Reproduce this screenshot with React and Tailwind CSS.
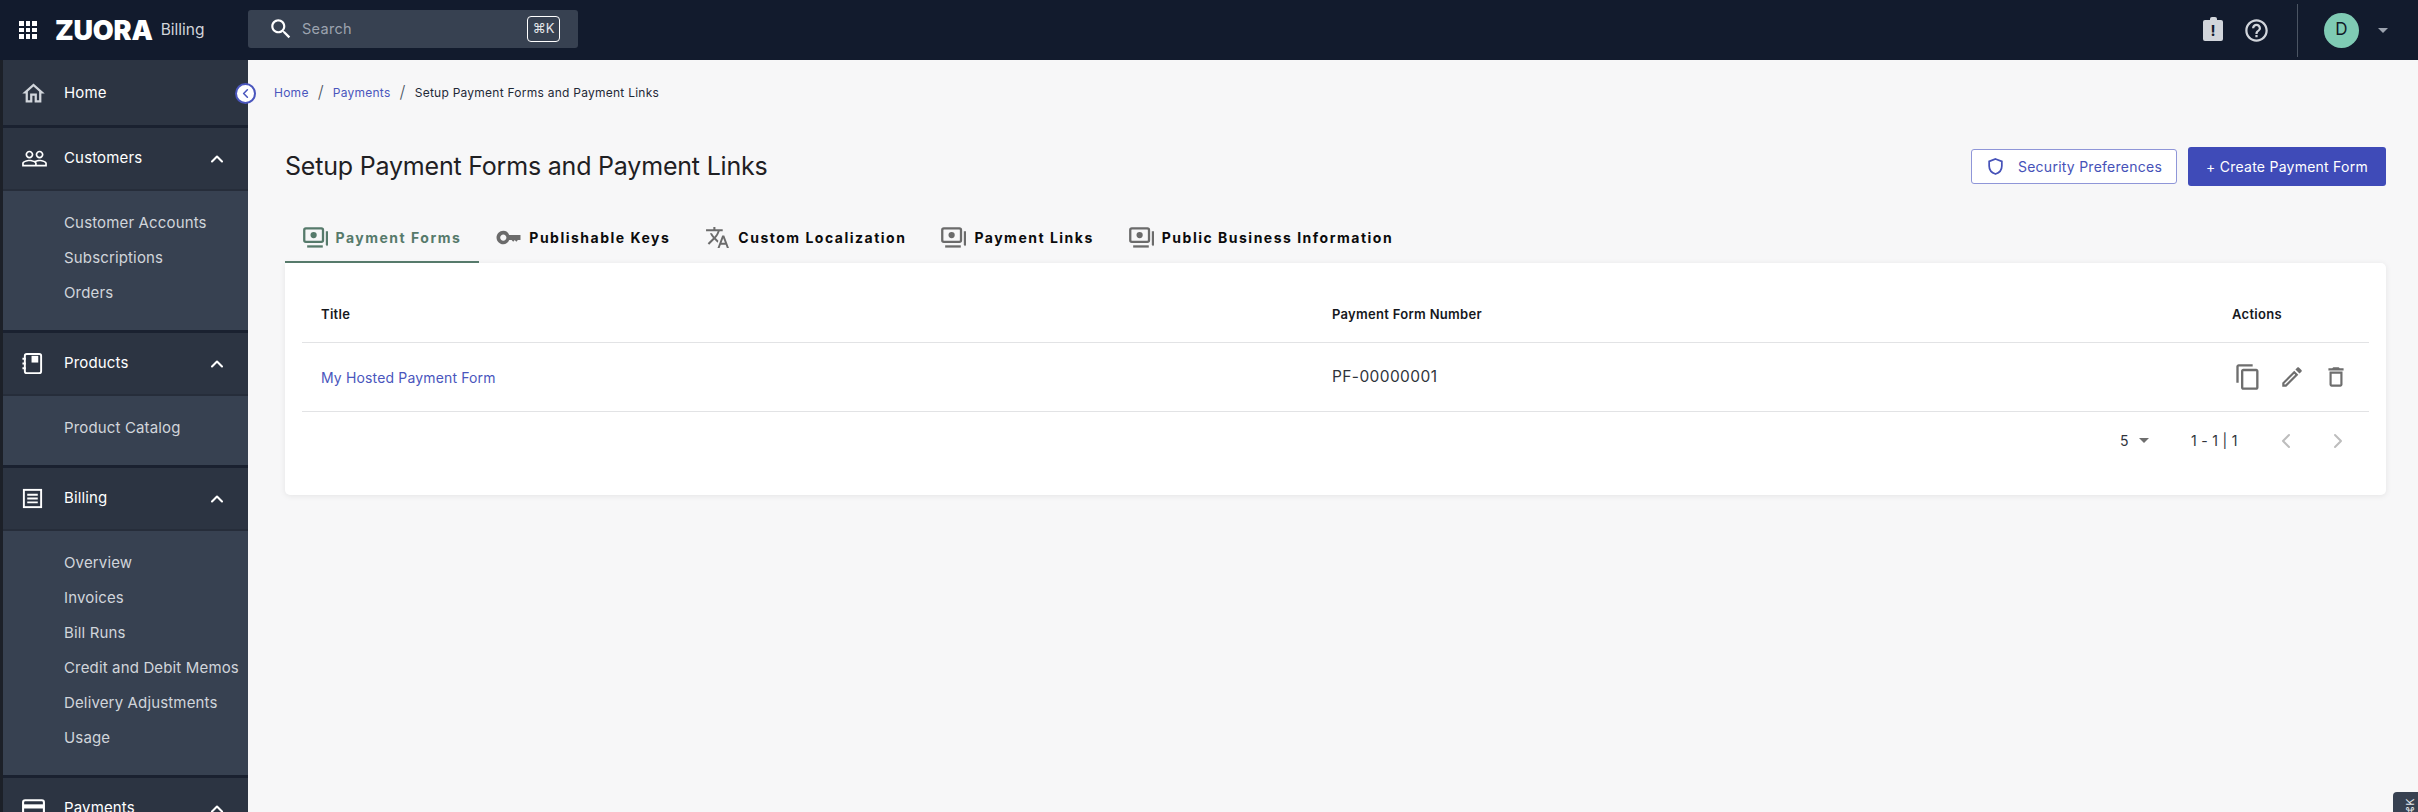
import React from "react";
import { ChevronUp, ChevronLeft, ChevronRight } from "lucide-react";

const font = { fontFamily: "Inter, 'Liberation Sans', sans-serif" };

const Icon = ({ d, className }) => (
  <svg viewBox="0 0 24 24" fill="currentColor" className={className}>
    <path d={d} />
  </svg>
);

const paths = {
  home: "M12 5.69l5 4.5V18h-2v-6H9v6H7v-7.81l5-4.5M12 3L2 12h3v8h6v-6h2v6h6v-8h3L12 3z",
  people:
    "M16.5 13c-1.2 0-3.07.34-4.5 1-1.43-.67-3.3-1-4.5-1C5.33 13 1 14.08 1 16.25V19h22v-2.75c0-2.17-4.33-3.25-6.5-3.25zm-4 4.5h-10v-1.25c0-.54 2.56-1.75 5-1.75s5 1.21 5 1.75v1.25zm9 0H14v-1.25c0-.46-.2-.86-.52-1.22.88-.3 1.96-.53 3.02-.53 2.44 0 5 1.21 5 1.75v1.25zM7.5 12c1.93 0 3.5-1.57 3.5-3.5S9.43 5 7.5 5 4 6.57 4 8.5 5.57 12 7.5 12zm0-5.5c1.1 0 2 .9 2 2s-.9 2-2 2-2-.9-2-2 .9-2 2-2zm9 5.5c1.93 0 3.5-1.57 3.5-3.5S18.43 5 16.5 5 13 6.57 13 8.5s1.57 3.5 3.5 3.5zm0-5.5c1.1 0 2 .9 2 2s-.9 2-2 2-2-.9-2-2 .9-2 2-2z",
  search:
    "M15.5 14h-.79l-.28-.27C15.41 12.59 16 11.11 16 9.5 16 5.91 13.09 3 9.5 3S3 5.91 3 9.5 5.91 16 9.5 16c1.61 0 3.09-.59 4.23-1.57l.27.28v.79l5 4.99L20.49 19l-4.99-5zm-6 0C7.01 14 5 11.99 5 9.5S7.01 5 9.5 5 14 7.01 14 9.5 11.99 14 9.5 14z",
  help: "M11 18h2v-2h-2v2zm1-16C6.48 2 2 6.48 2 12s4.48 10 10 10 10-4.48 10-10S17.52 2 12 2zm0 18c-4.41 0-8-3.59-8-8s3.59-8 8-8 8 3.59 8 8-3.59 8-8 8zm0-14c-2.21 0-4 1.79-4 4h2c0-1.1.9-2 2-2s2 .9 2 2c0 2-3 1.75-3 5h2c0-2.25 3-2.5 3-5 0-2.21-1.79-4-4-4z",
  copy: "M16 1H4c-1.1 0-2 .9-2 2v14h2V3h12V1zm3 4H8c-1.1 0-2 .9-2 2v14c0 1.1.9 2 2 2h11c1.1 0 2-.9 2-2V7c0-1.1-.9-2-2-2zm0 16H8V7h11v14z",
  edit: "M3 17.25V21h3.75L17.81 9.94l-3.75-3.75L3 17.25zM5.92 19H5v-.92l9.06-9.06.92.92L5.92 19zM20.71 5.63l-2.34-2.34c-.2-.2-.45-.29-.71-.29s-.51.1-.7.29l-1.83 1.83 3.75 3.75 1.83-1.83c.39-.39.39-1.02 0-1.41z",
  trash: "M6 19c0 1.1.9 2 2 2h8c1.1 0 2-.9 2-2V7H6v12zM8 9h8v10H8V9zm7.5-5l-1-1h-5l-1 1H5v2h14V4h-3.5z",
  key: "M12.65 9.5C11.8 7 9.6 5.5 7 5.5c-3.6 0-6.5 2.9-6.5 6.5s2.9 6.5 6.5 6.5c2.6 0 4.8-1.5 5.65-4H15l1.5 1.5L18 14.5l1.5 1.5L21 14.5h2.5v-5H12.65zM7 15c-1.66 0-3-1.34-3-3s1.34-3 3-3 3 1.34 3 3-1.34 3-3 3z",
  translate:
    "M12.87 15.07l-2.54-2.51.03-.03c1.74-1.94 2.98-4.17 3.71-6.53H17V4h-7V2H8v2H1v1.99h11.17C11.5 7.92 10.44 9.75 9 11.35 8.07 10.32 7.3 9.19 6.69 8h-2c.73 1.63 1.73 3.17 2.98 4.56l-5.09 5.02L4 19l5-5 3.11 3.11.76-2.04zM18.5 10h-2L12 22h2l1.12-3h4.75L21 22h2l-4.5-12zm-2.62 7l1.62-4.33L19.12 17h-3.24z",
};

const MoneyIcon = ({ className }) => (
  <svg viewBox="0 0 24 20" fill="none" stroke="currentColor" strokeWidth="2.2" className={className}>
    <rect x="1.2" y="1.2" width="18" height="13" rx="1.5" />
    <circle cx="10.2" cy="7.7" r="3" fill="currentColor" stroke="none" />
    <path d="M23 4v12.5a1.5 1.5 0 0 1-0.6 1" />
    <path d="M4 18.6h15" />
  </svg>
);

const NotebookIcon = ({ className }) => (
  <svg viewBox="0 0 24 24" fill="none" stroke="currentColor" strokeWidth="2" className={className}>
    <rect x="4" y="2" width="17" height="20" rx="2" />
    <rect x="11" y="4" width="7" height="7" fill="currentColor" stroke="none" />
    <path d="M1.5 7H5M1.5 12H5M1.5 17H5" />
  </svg>
);

const ReceiptIcon = ({ className }) => (
  <svg viewBox="0 0 24 24" fill="none" stroke="currentColor" strokeWidth="2" className={className}>
    <rect x="3" y="3" width="18" height="18" />
    <path d="M6.5 8h11M6.5 12h11M6.5 16h11" />
  </svg>
);

const CardIcon = ({ className }) => (
  <svg viewBox="0 0 24 24" fill="none" stroke="currentColor" strokeWidth="2" className={className}>
    <rect x="2" y="4" width="20" height="16" rx="2" />
    <path d="M2 10h20" strokeWidth="4" />
  </svg>
);

const Caret = ({ className }) => (
  <span className={`w-0 h-0 border-x-[5px] border-x-transparent border-t-[5px] ${className}`} />
);

const sections = [
  { title: "Customers", icon: <Icon d={paths.people} className="w-[27px] h-[27px]" />, items: ["Customer Accounts", "Subscriptions", "Orders"] },
  { title: "Products", icon: <NotebookIcon className="w-[23px] h-[23px]" />, items: ["Product Catalog"] },
  {
    title: "Billing",
    icon: <ReceiptIcon className="w-[23px] h-[23px]" />,
    items: ["Overview", "Invoices", "Bill Runs", "Credit and Debit Memos", "Delivery Adjustments", "Usage"],
  },
  { title: "Payments", icon: <CardIcon className="w-[25px] h-[25px]" />, items: [] },
];

const tabs = [
  { label: "Payment Forms", icon: <MoneyIcon className="w-[25px] h-[21px]" />, active: true },
  { label: "Publishable Keys", icon: <Icon d={paths.key} className="w-[25px] h-[25px]" /> },
  { label: "Custom Localization", icon: <Icon d={paths.translate} className="w-[25px] h-[25px]" /> },
  { label: "Payment Links", icon: <MoneyIcon className="w-[25px] h-[21px]" /> },
  { label: "Public Business Information", icon: <MoneyIcon className="w-[25px] h-[21px]" /> },
];

const Header = () => (
  <header className="h-[60px] shrink-0 bg-[#121b2d] flex items-center">
    <div className="w-[248px] flex items-center pl-[19px]">
      <div className="grid grid-cols-3 gap-[2px] w-[18px]">
        {Array.from({ length: 9 }).map((_, i) => (
          <span key={i} className="w-[4.6px] h-[4.6px] bg-white" />
        ))}
      </div>
      <span className="ml-[18px] text-white font-black text-[27px] leading-none tracking-[-0.2px]">ZUORA</span>
      <span className="ml-[8px] text-[#d1d5db] text-[15.5px]">Billing</span>
    </div>
    <div className="w-[330px] h-[38px] bg-[#374151] rounded-[3px] flex items-center pl-[20px] pr-[18px] mb-[2px]">
      <Icon d={paths.search} className="w-[26px] h-[26px] text-white" />
      <span className="ml-[8px] text-[#9ca3af] text-[14.5px] tracking-[0.3px]">Search</span>
      <span className="ml-auto w-[33px] h-[26px] border border-white rounded-[4px] text-[#e5e7eb] text-[13px] flex items-center justify-center">⌘K</span>
    </div>
    <div className="ml-auto flex items-center h-full">
      <div className="w-[20px] h-[21px] bg-[#d1d5db] rounded-[2px] relative flex items-center justify-center text-[#121b2d] font-bold text-[15px] leading-none">
        <span className="absolute -top-[3px] w-[7px] h-[4px] bg-[#d1d5db] rounded-t-[2px]" />!
      </div>
      <Icon d={paths.help} className="ml-[20px] w-[27px] h-[27px] text-[#d1d5db]" />
      <div className="ml-[27px] w-px h-[53px] bg-[#4b5563]" />
      <div className="ml-[26px] w-[35px] h-[35px] rounded-full bg-[#7fcbb4] flex items-center justify-center text-[#111827] text-[17px]">D</div>
      <Caret className="ml-[19px] mr-[30px] border-t-[#9ca3af]" />
    </div>
  </header>
);

const Sidebar = () => (
  <aside className="w-[248px] shrink-0 bg-[#374151] border-l-[3px] border-[#1c2028] overflow-hidden">
    <div className="h-[65px] bg-[#2c3442] flex items-center pl-[17px] pt-[1px] text-white text-[15px] tracking-[0.15px]">
      <Icon d={paths.home} className="w-[27px] h-[27px] text-[#d1d5db]" />
      <span className="ml-[17px]">Home</span>
    </div>
    {sections.map((s) => (
      <div key={s.title} className="border-t-[3px] border-[#1a2130]">
        <div className="h-[63px] bg-[#2c3442] border-b-[2px] border-[#262d3a] flex items-center text-white text-[15px] tracking-[0.15px]">
          <span className="w-[61px] pl-[18px] flex items-center text-white">{s.icon}</span>
          <span>{s.title}</span>
          <ChevronUp className="ml-auto mr-[21px] w-[20px] h-[20px]" strokeWidth={2.5} />
        </div>
        {s.items.length > 0 && (
          <div className="pt-[15px] pb-[19px]">
            {s.items.map((item) => (
              <div key={item} className="h-[35px] flex items-center pl-[61px] text-[#d1d5db] text-[15px] tracking-[0.15px] whitespace-nowrap">
                {item}
              </div>
            ))}
          </div>
        )}
      </div>
    ))}
  </aside>
);

const Toolbar = () => (
  <div className="flex items-center justify-between ml-[37px] mr-[32px] mt-[44px]">
    <h1 className="text-[25px] leading-[40px] tracking-[-0.2px] text-[#1f2023]">Setup Payment Forms and Payment Links</h1>
    <div className="flex items-center gap-[11px]">
      <button className="h-[35px] w-[206px] border border-[#8f96d8] rounded-[3px] bg-white text-[#4652b8] text-[14px] tracking-[0.25px] flex items-center justify-center gap-[13px]">
        <svg viewBox="0 0 24 24" fill="none" stroke="currentColor" strokeWidth="2.2" className="w-[19px] h-[19px]">
          <path d="M12 2.5l8 3v6c0 5-3.4 8.6-8 10-4.6-1.4-8-5-8-10v-6z" />
        </svg>
        Security Preferences
      </button>
      <button className="h-[39px] w-[198px] rounded-[3px] bg-[#3f4bb8] text-white text-[14px] tracking-[0.25px]">+ Create Payment Form</button>
    </div>
  </div>
);

const Tabs = () => (
  <div className="flex ml-[37px] mt-[30px] h-[47px]">
    {tabs.map((t) => (
      <div
        key={t.label}
        className={`flex items-center px-[17.5px] pb-[2px] gap-[8px] text-[14px] font-bold tracking-[1.5px] whitespace-nowrap border-b-2 ${
          t.active ? "text-[#567a6b] border-[#567a6b]" : "text-[#0b0b0c] border-transparent"
        }`}
      >
        <span className={t.active ? "text-[#567a6b]" : "text-[#6b6b6b]"}>{t.icon}</span>
        {t.label}
      </div>
    ))}
  </div>
);

const Table = () => (
  <div className="ml-[37px] mr-[32px] h-[232px] bg-white rounded-b-[5px] rounded-tr-[5px] shadow-[0_1px_6px_rgba(0,0,0,0.08)] px-[17px] text-[#1f2937]">
    <div className="h-[80px] pt-[25px] border-b border-[#e2e3e5] pl-[19px] grid grid-cols-[1011px_900px_1fr] items-center text-[13px] font-semibold tracking-[0.3px] text-[#16181d]">
      <span>Title</span>
      <span>Payment Form Number</span>
      <span>Actions</span>
    </div>
    <div className="h-[69px] border-b border-[#e2e3e5] pl-[19px] grid grid-cols-[1011px_900px_1fr] items-center">
      <span className="text-[14px] text-[#4a56bd] tracking-[0.15px]">My Hosted Payment Form</span>
      <span className="text-[15.5px] text-[#2f343b] tracking-[0.4px]">PF-00000001</span>
      <div className="flex items-center text-[#6e6e6e] ml-[2px]">
        <Icon d={paths.copy} className="w-[28px] h-[28px]" />
        <Icon d={paths.edit} className="ml-[17px] w-[26px] h-[26px]" />
        <Icon d={paths.trash} className="ml-[18px] w-[26px] h-[26px]" />
      </div>
    </div>
    <div className="h-[57px] flex items-center text-[14px] text-[#2f343b] pl-[1818px]">
      <span className="w-[14px]">5</span>
      <Caret className="ml-[5px] border-t-[#6e6e6e]" />
      <span className="ml-[42px] whitespace-nowrap tracking-[0.3px]">1 - 1 | 1</span>
      <ChevronLeft className="ml-[36px] w-[24px] h-[24px] text-[#bdbdbd]" />
      <ChevronRight className="ml-[28px] w-[24px] h-[24px] text-[#bdbdbd]" />
    </div>
  </div>
);

export default function App() {
  return (
    <div className="h-screen flex flex-col overflow-hidden relative" style={font}>
      <Header />
      <div className="flex flex-1 min-h-0">
        <Sidebar />
        <main className="flex-1 bg-[#f7f7f8] relative">
          <nav className="ml-[26px] mt-[24px] h-[18px] flex items-center text-[12px] tracking-[0.25px]">
            <span className="text-[#4a56bd]">Home</span>
            <span className="mx-[9px] text-[#4b5563] text-[17px] font-light">/</span>
            <span className="text-[#4a56bd]">Payments</span>
            <span className="mx-[9px] text-[#4b5563] text-[17px] font-light">/</span>
            <span className="text-[#1f2937]">Setup Payment Forms and Payment Links</span>
          </nav>
          <Toolbar />
          <Tabs />
          <Table />
        </main>
      </div>
      {/* sidebar collapse toggle */}
      <div className="absolute left-[235px] top-[83px] w-[21px] h-[21px] rounded-full bg-white border-[2px] border-[#4a56bd] flex items-center justify-center text-[#4a56bd]">
        <ChevronLeft className="w-[15px] h-[15px]" strokeWidth={2.5} />
      </div>
      {/* rotated shortcut tab, bottom right */}
      <div className="absolute right-0 bottom-0 w-[25px] h-[20px] pl-[9px] bg-[#374151] rounded-tl-[4px] overflow-hidden flex items-start justify-center text-[#e5e7eb] text-[11px] leading-none">
        <span className="block -rotate-90 mt-[10px] whitespace-nowrap">⌘K</span>
      </div>
    </div>
  );
}
